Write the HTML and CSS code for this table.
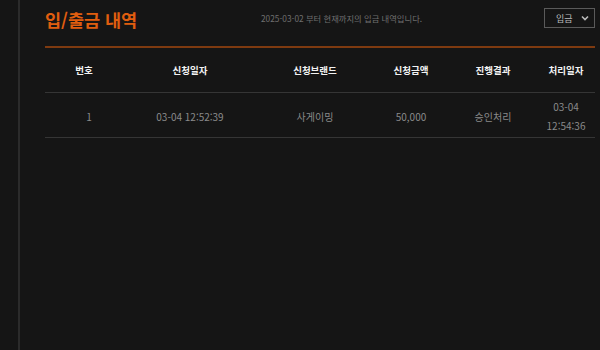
FILE: index.html
```html
<!DOCTYPE html>
<html lang="ko">
<head>
<meta charset="utf-8">
<link rel="stylesheet" href="styles.css">
</head>
<body>
<div class="layout">
  <div class="rail"></div>
  <main class="main">
    <div class="head">
      <h1 class="title">입/출금 내역</h1>
      <p class="sub">2025-03-02 부터 현재까지의 입금 내역입니다.</p>
      <div class="select">
        <span>입금</span>
        <svg class="chev" width="8" height="6" viewBox="0 0 8 6"><path d="M1 1.5 L4 4.5 L7 1.5" fill="none" stroke="#bbb" stroke-width="1.6"/></svg>
      </div>
    </div>
    <table class="tbl">
      <colgroup>
        <col class="c1"><col class="c2"><col class="c3"><col class="c4"><col class="c5"><col class="c6">
      </colgroup>
      <thead>
        <tr><th>번호</th><th>신청일자</th><th>신청브랜드</th><th>신청금액</th><th>진행결과</th><th>처리일자</th></tr>
      </thead>
      <tbody>
        <tr><td class="num">1</td><td>03-04 12:52:39</td><td>사게이밍</td><td>50,000</td><td>승인처리</td><td>03-04<br>12:54:36</td></tr>
      </tbody>
    </table>
  </main>
</div>
</body>
</html>
```
FILE: styles.css
```css
html, body {
  margin: 0;
  padding: 0;
  background: #151515;
  height: 100%;
}
body {
  font-family: "Noto Sans CJK KR", "Noto Sans", sans-serif;
  color: #888;
}
.layout {
  display: flex;
  height: 350px;
}
.rail {
  width: 18px;
  border-right: 2px solid #2b2b2b;
  flex: none;
}
.main {
  flex: 1;
  padding: 0 5px 0 25px;
}
.head {
  display: flex;
  align-items: center;
  height: 36px;
  border-bottom: 2px solid #7e3a10;
  padding-bottom: 10px;
}
.title {
  margin: 0;
  width: 216px;
  font-size: 17.5px;
  font-weight: 700;
  color: #e05e0f;
  padding-top: 2px;
}
.sub {
  margin: 0;
  font-size: 8.3px;
  color: #6f6f6f;
}
.select {
  margin-left: auto;
  display: flex;
  align-items: center;
  justify-content: space-between;
  padding: 0 5px 0 11px;
  box-sizing: border-box;
  width: 51px;
  height: 20px;
  border: 1px solid #5a5a5a;
  font-size: 9px;
  color: #bbb;
}
.tbl {
  width: 550px;
  border-collapse: collapse;
  table-layout: fixed;
}
.c1 { width: 78px; }
.c2 { width: 134px; }
.c3 { width: 116px; }
.c4 { width: 76px; }
.c5 { width: 88px; }
.c6 { width: 58px; }
.tbl th {
  height: 44px;
  font-size: 9.5px;
  font-weight: 700;
  color: #f2f2f2;
  border-bottom: 1px solid #353535;
  padding: 0;
  text-align: center;
}
.tbl td {
  height: 42px;
  font-size: 10px;
  line-height: 19px;
  color: #8a8a8a;
  border-bottom: 1px solid #353535;
  padding: 2px 0 0;
  text-align: center;
}
.tbl td.num {
  padding-left: 10px;
}
```
